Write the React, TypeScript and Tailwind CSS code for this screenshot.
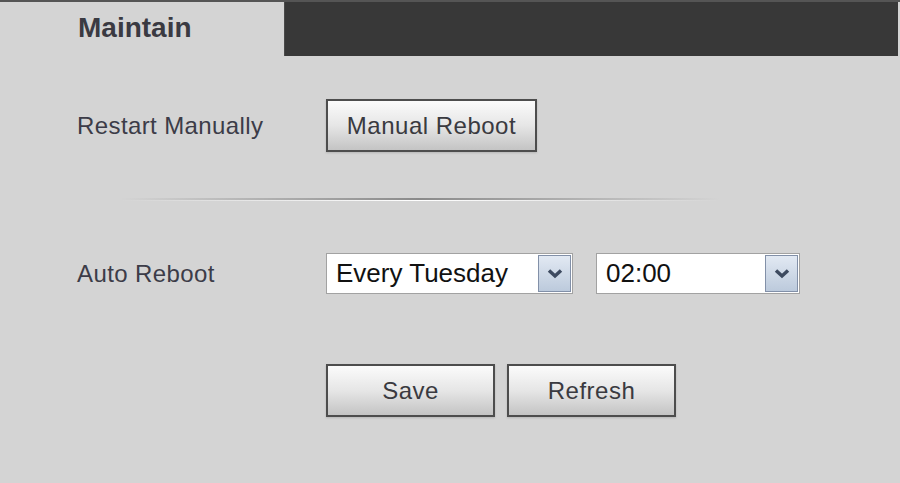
import React from 'react';

const font = { fontFamily: '"Liberation Sans", Arial, sans-serif' };

const Button: React.FC<{ label: string; w: string }> = ({ label, w }) => (
  <button
    className={`${w} h-[53px] border-2 border-[#4d4d4d] bg-gradient-to-b from-[#fbfbfb] via-[#e6e6e6] to-[#c4c4c4] text-[24px] tracking-[0.5px] text-[#3a3a40] shadow-[0_1px_2px_rgba(0,0,0,0.15)]`}
  >
    {label}
  </button>
);

const Select: React.FC<{ value: string; w: string }> = ({ value, w }) => (
  <div className={`${w} h-[41px] flex items-stretch border border-[#a2a2a2] bg-white`}>
    <span className="flex-1 flex items-center pl-[9px] text-[26px] text-[#111]">{value}</span>
    <span className="w-[33px] m-[1px] flex items-center justify-center border border-[#8290a8] bg-gradient-to-b from-[#e2e9f3] to-[#bccadc]">
      <svg width="16" height="11" viewBox="0 0 16 11" className="shrink-0">
        <path d="M2 2.5 L8 8 L14 2.5" fill="none" stroke="#3d4a60" strokeWidth="3.5" />
      </svg>
    </span>
  </div>
);

export default function App() {
  return (
    <div className="w-[900px] h-[483px] bg-[#d4d4d4] flex flex-col overflow-hidden" style={font}>
      {/* Header */}
      <div className="flex h-[57px] border-t-2 border-[#555]">
        <div className="w-[284px] flex items-center pl-[78px] pb-[4px]">
          <span className="text-[28px] font-bold text-[#3a3a42]">Maintain</span>
        </div>
        <div className="flex-1 bg-[#383838] border-l border-[#4a4a4a] mb-[1px] mr-[2px]" />
      </div>

      <div className="pl-[77px] flex flex-col">
        {/* Restart manually */}
        <div className="mt-[42px] h-[53px] flex items-center">
          <span className="w-[249px] text-[24px] tracking-[0.4px] text-[#3c3c48]">Restart Manually</span>
          <Button label="Manual Reboot" w="w-[211px]" />
        </div>

        {/* Separator */}
        <div className="mt-[46px] ml-[43px] w-[600px] flex flex-col">
          <div className="h-[2px] bg-gradient-to-r from-transparent via-[#8a8a8a] to-transparent" />
          <div className="h-[1px] bg-gradient-to-r from-transparent via-white to-transparent" />
        </div>

        {/* Auto reboot */}
        <div className="mt-[52px] h-[41px] flex items-center">
          <span className="w-[249px] text-[24px] tracking-[0.4px] text-[#3c3c48]">Auto Reboot</span>
          <div className="flex gap-[23px]">
            <Select value="Every Tuesday" w="w-[247px]" />
            <Select value="02:00" w="w-[204px]" />
          </div>
        </div>

        {/* Actions */}
        <div className="mt-[70px] pl-[249px] flex gap-[12px]">
          <Button label="Save" w="w-[169px]" />
          <Button label="Refresh" w="w-[169px]" />
        </div>
      </div>
    </div>
  );
}
